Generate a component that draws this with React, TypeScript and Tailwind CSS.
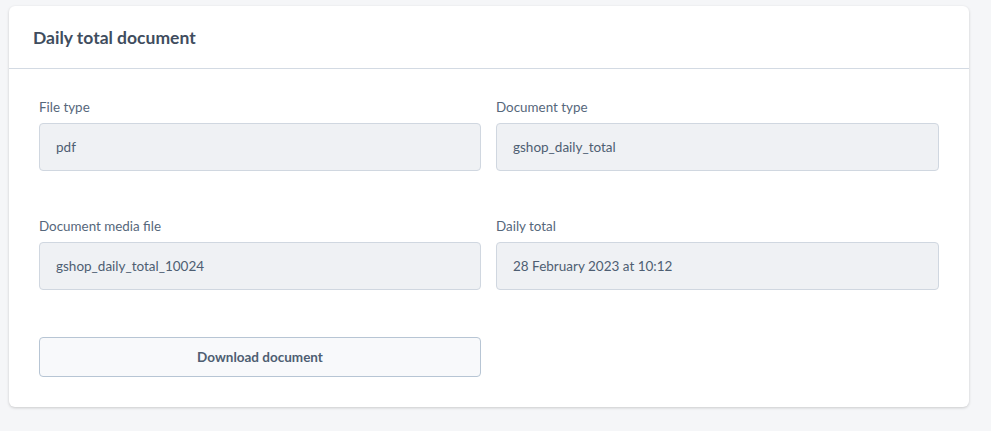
export default function App() {
  const fields = [
    { label: "File type", value: "pdf" },
    { label: "Document type", value: "gshop_daily_total" },
    { label: "Document media file", value: "gshop_daily_total_10024" },
    { label: "Daily total", value: "28 February 2023 at 10:12" },
  ];

  return (
    <div className="min-h-[431px] bg-[#f5f6f8] pl-[9px] pt-[6px] font-['Lato',sans-serif]">
      {/* CARD */}
      <div className="w-[960px] rounded-md bg-white shadow-[0_1px_3px_rgba(0,0,0,0.18)]">
        {/* HEADER */}
        <div className="h-[63px] border-b border-[#d3dae3] pl-6 pt-[3px] flex items-center">
          <h1 className="text-[17.5px] font-bold text-[#3f4d5e]">Daily total document</h1>
        </div>

        {/* BODY */}
        <div className="p-[30px]">
          <div className="grid grid-cols-[442px_443px] gap-x-[15px] gap-y-[47px]">
            {fields.map((f) => (
              <div key={f.label}>
                <div className="h-4 leading-4 text-[13.4px] text-[#56677b]">{f.label}</div>
                <div className="mt-2 h-12 rounded border border-[#d0d7e0] bg-[#eff1f4] px-4 flex items-center text-[13.5px] text-[#4e5e72]">
                  {f.value}
                </div>
              </div>
            ))}
            <button className="h-10 rounded border border-[#b7c5d4] bg-[#f8f9fb] text-[13.5px] font-bold text-[#4e5e72]">
              Download document
            </button>
          </div>
        </div>
      </div>
    </div>
  );
}
